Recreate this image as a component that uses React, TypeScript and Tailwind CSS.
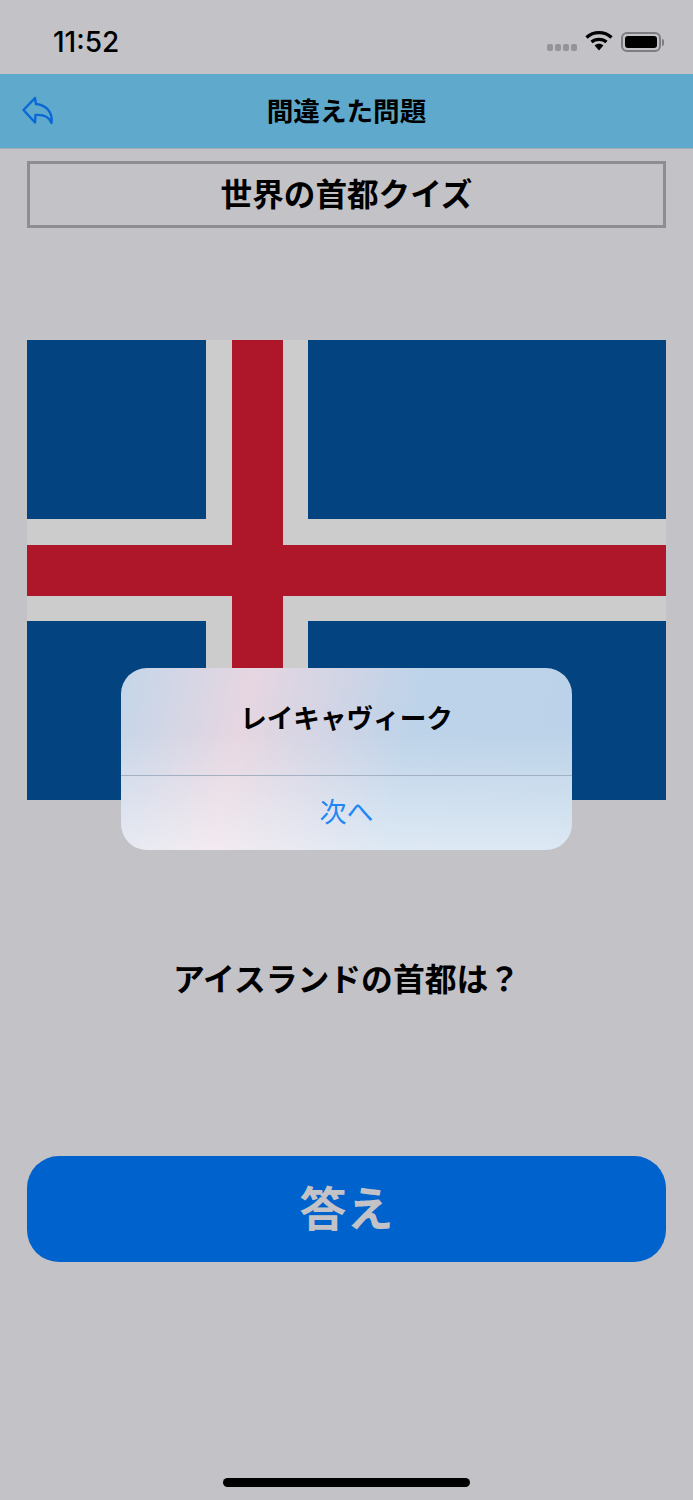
const jp = "font-['Inter','Noto_Sans_CJK_JP',sans-serif]";

function StatusBar() {
  return (
    <div className="h-[74px] flex items-start justify-between pl-[53px] pr-[29px]">
      <span className="mt-[24px] text-[28px] leading-[36px] font-medium text-black font-['Inter',sans-serif]">
        11:52
      </span>
      <div className="flex items-start mt-[30px]">
        <div className="flex gap-[2px] mt-[14px] mr-[8px]">
          <span className="w-[6px] h-[7px] rounded-[2px] bg-[#949497]"></span>
          <span className="w-[6px] h-[7px] rounded-[2px] bg-[#949497]"></span>
          <span className="w-[6px] h-[7px] rounded-[2px] bg-[#949497]"></span>
          <span className="w-[6px] h-[7px] rounded-[2px] bg-[#949497]"></span>
        </div>
        <svg width="28" height="22" viewBox="0 0 28 22" className="mr-[8px]">
          <path d="M1.5 7.5 C8.5 1 19.5 1 26.5 7.5" fill="none" stroke="#000" strokeWidth="3.4" />
          <path d="M6.5 12 C10.5 8.4 17.5 8.4 21.5 12" fill="none" stroke="#000" strokeWidth="3.2" />
          <path d="M9.6 15.4 C12 13.2 16 13.2 18.4 15.4 L14 20.5 Z" fill="#000" />
        </svg>
        <div className="flex items-center mt-[2px]">
          <div className="w-[40px] h-[20px] rounded-[6px] border-2 border-[#7d7d80] p-[2px]">
            <div className="w-full h-full rounded-[3px] bg-black"></div>
          </div>
          <div className="w-[2px] h-[7px] rounded-r-[2px] bg-[#7d7d80] ml-[1px]"></div>
        </div>
      </div>
    </div>
  );
}

function NavBar() {
  return (
    <div className="relative h-[75px] bg-[#5fa9cc] border-b border-[#a0adb4] flex items-center justify-center">
      <svg width="34" height="30" viewBox="0 0 34 30" className="absolute left-[20px] top-[22px]">
        <path
          d="M15 2 L3.5 14 L15 26.5 L15.5 19 C22 18.5 29 20.5 31.5 27 C33 16 26 9 16 8 Z"
          fill="none"
          stroke="#0a68d6"
          strokeWidth="2.4"
          strokeLinejoin="round"
          strokeLinecap="round"
        />
      </svg>
      <span className={`text-[26.6px] leading-[34px] font-bold text-black ${jp}`}>間違えた問題</span>
    </div>
  );
}

function Flag() {
  return (
    <svg viewBox="0 0 639 460" className="block w-[639px] h-[460px]">
      <rect width="639" height="460" fill="#03437f" />
      <rect x="179" width="102" height="460" fill="#cccccc" />
      <rect y="179" width="639" height="102" fill="#cccccc" />
      <rect x="205" width="51" height="460" fill="#ae1729" />
      <rect y="205" width="639" height="51" fill="#ae1729" />
    </svg>
  );
}

function Alert() {
  return (
    <div className="absolute left-[121px] top-[668px] w-[451px] h-[182px] rounded-[26px] overflow-hidden flex flex-col bg-[linear-gradient(to_bottom,rgba(255,255,255,0)_35%,rgba(255,255,255,0.5)_100%),linear-gradient(103deg,#c3d6e9_0%,#e6d6e1_27%,#bdd3e9_62%,#bbd2e8_100%)]">
      <div className="h-[108px] flex items-start justify-center border-b border-[#a3b1c2]">
        <span className={`mt-[33px] text-[26.6px] leading-[34px] font-bold text-black ${jp}`}>レイキャヴィーク</span>
      </div>
      <div className="flex-1 flex items-center justify-center">
        <span className={`text-[27px] leading-[32px] text-[#1f87f5] ${jp}`}>次へ</span>
      </div>
    </div>
  );
}

export default function App() {
  return (
    <div className="relative w-[693px] h-[1500px] overflow-hidden bg-[#c3c2c6]">
      <StatusBar />
      <NavBar />
      <div className="px-[27px] pt-[12px] flex flex-col">
        <div className="h-[67px] border-[3px] border-[#8e8e90] flex items-center justify-center">
          <span className={`text-[31.6px] leading-[40px] font-bold text-black ${jp}`}>世界の首都クイズ</span>
        </div>
        <div className="mt-[112px]">
          <Flag />
        </div>
        <div className={`mt-[158px] h-[44px] flex items-center justify-center text-[31.8px] leading-[44px] font-bold text-black ${jp}`}>
          アイスランドの首都は？
        </div>
        <div className="mt-[154px] h-[106px] rounded-[32px] bg-[#0062cc] flex items-center justify-center">
          <span className={`text-[47px] leading-[60px] font-bold text-[#c3c2c6] ${jp}`}>答え</span>
        </div>
      </div>
      <Alert />
      <div className="absolute left-[223px] top-[1478px] w-[247px] h-[9px] rounded-full bg-black"></div>
    </div>
  );
}
